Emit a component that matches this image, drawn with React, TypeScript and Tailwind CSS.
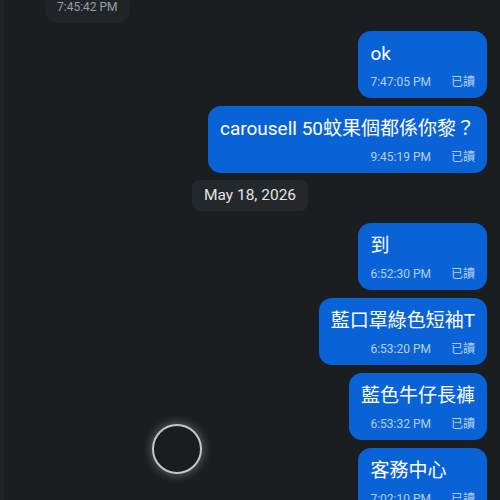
import React from "react";

type Msg = { text: string; time: string };

const font = { fontFamily: 'Roboto, "Noto Sans CJK TC", "Noto Sans", sans-serif' };

function Sent({ text, time }: Msg) {
  return (
    <div className="flex justify-end">
      <div className="rounded-[13px] bg-[#0a63d6] px-3 pt-[10px] pb-[8px] flex flex-col">
        <div className="text-[19px] leading-[26px] text-white whitespace-nowrap">{text}</div>
        <div className="mt-[7px] flex justify-end gap-[20px] text-[12px] leading-[16px] text-[#b6cff2] whitespace-nowrap">
          <span>{time}</span>
          <span>已讀</span>
        </div>
      </div>
    </div>
  );
}

export default function App() {
  const msgs1: Msg[] = [
    { text: "ok", time: "7:47:05 PM" },
    { text: "carousell 50蚊果個都係你黎？", time: "9:45:19 PM" },
  ];
  const msgs2: Msg[] = [
    { text: "到", time: "6:52:30 PM" },
    { text: "藍口罩綠色短袖T", time: "6:53:20 PM" },
    { text: "藍色牛仔長褲", time: "6:53:32 PM" },
    { text: "客務中心", time: "7:02:10 PM" },
  ];
  return (
    <div className="relative w-[500px] h-[500px] overflow-hidden bg-[#1b1e21]" style={font}>
      <div className="absolute left-0 top-0 w-[5px] h-full bg-[#212427] border-r border-[#1d2023]" />
      <div className="flex flex-col gap-2 px-[13px] -mt-[44px]">
        <div className="flex justify-start pl-[32px]">
          <div className="rounded-[13px] bg-[#222528] px-3 pt-[10px] pb-[8px] flex flex-col">
            <div className="text-[19px] leading-[26px] text-white whitespace-nowrap">&nbsp;</div>
            <div className="mt-[7px] text-[12px] leading-[16px] text-[#9a9ea4] whitespace-nowrap">7:45:42 PM</div>
          </div>
        </div>
        {msgs1.map((m) => (
          <Sent key={m.time} {...m} />
        ))}
        <div className="flex justify-center -mt-[1px] mb-[4px]">
          <div className="rounded-[8px] bg-[#25282b] px-3 h-[31px] flex items-center text-[15.5px] text-[#e2e3e5]">
            May 18, 2026
          </div>
        </div>
        {msgs2.map((m) => (
          <Sent key={m.time} {...m} />
        ))}
      </div>
      <div className="absolute left-[152px] top-[424px] w-[50px] h-[50px] rounded-full border-[2.5px] border-[#c4c5c7] bg-[#1a1c1f] shadow-[0_0_9px_2px_rgba(210,210,210,0.3)]" />
    </div>
  );
}
